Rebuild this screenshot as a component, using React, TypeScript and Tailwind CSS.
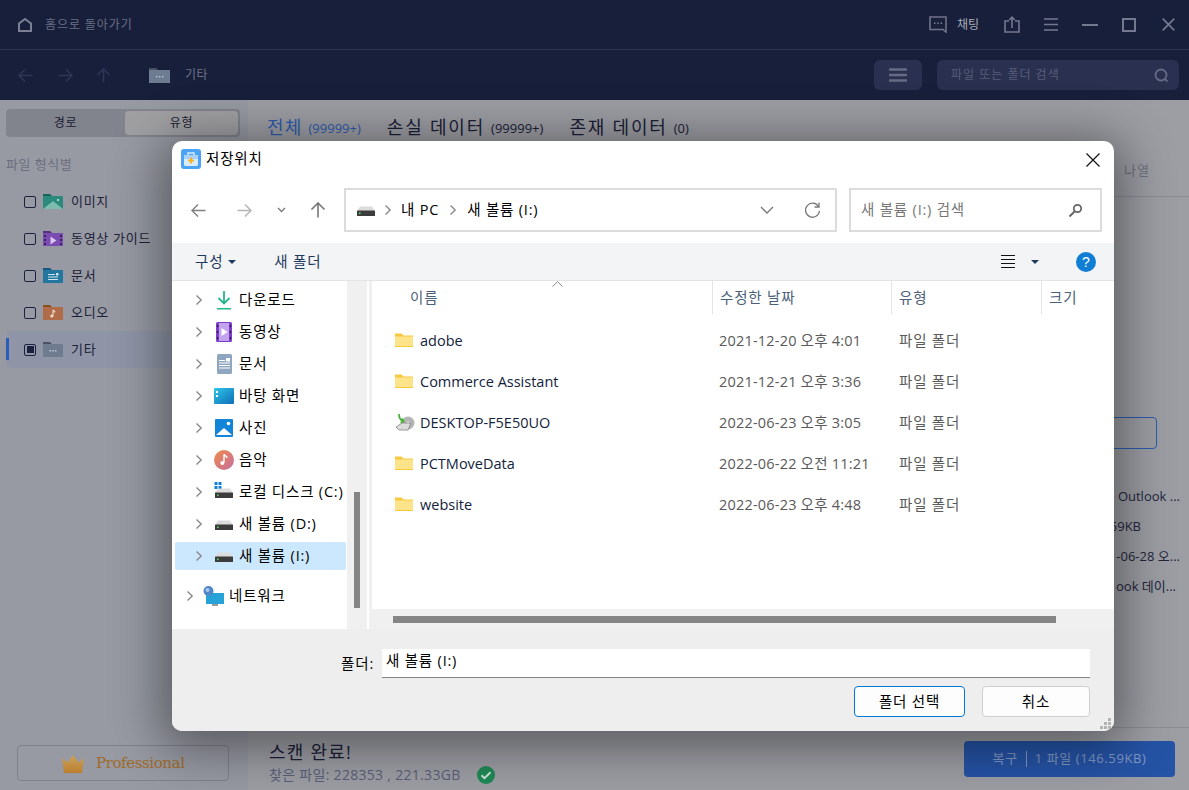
import React from "react";

const ko = "tracking-[0.8px]";

const Folder = ({ c = "#f8c93e", l = "#fde38a" }: { c?: string; l?: string }) => (
  <svg width="18" height="15" viewBox="0 0 18 15" className="shrink-0">
    <path d="M0 0.5h6.5l2 2H18V14H0z" fill={c} />
    <rect x="0" y="3.5" width="18" height="10.5" fill={l} />
    <rect x="0" y="13" width="18" height="1" fill={c} />
  </svg>
);

const Drive = ({ win = false }: { win?: boolean }) => (
  <svg width="20" height="20" viewBox="0 0 20 20" className="shrink-0">
    {win && (
      <g fill="#0f80d8">
        <rect x="0.5" y="0" width="3" height="3" />
        <rect x="4.5" y="0" width="3" height="3" />
        <rect x="0.5" y="4" width="3" height="3" />
        <rect x="4.5" y="4" width="3" height="3" />
      </g>
    )}
    <path d="M4 6.500h12l3 4.500H1z" fill="#dcdcdc" />
    <rect x="1" y="10.500" width="18" height="5.500" rx="0.5" fill="#3c3c3c" />
    <rect x="3" y="12.500" width="1.600" height="1.600" fill="#5fd35f" />
  </svg>
);

const Chev = ({ cls = "" }: { cls?: string }) => (
  <svg width="8" height="12" viewBox="0 0 8 12" className={"shrink-0 " + cls}>
    <path d="M1.500 1.500L6.200 6L1.500 10.500" fill="none" stroke="#8a8a8a" strokeWidth="1.400" />
  </svg>
);

const Arrow = ({ c, dir, w = 15 }: { c: string; dir: "l" | "r" | "u"; w?: number }) => (
  <svg width={w} height={w} viewBox="0 0 16 16" className="shrink-0">
    {dir === "l" && <path d="M15.500 8H1M7.500 1.500L1 8l6.500 6.500" fill="none" stroke={c} strokeWidth="1.600" />}
    {dir === "r" && <path d="M.5 8H15M8.500 1.500L15 8l-6.500 6.500" fill="none" stroke={c} strokeWidth="1.600" />}
    {dir === "u" && <path d="M8 15.500V1M1.500 7.500L8 1l6.500 6.500" fill="none" stroke={c} strokeWidth="1.600" />}
  </svg>
);

const Cat = ({ c, d, children }: { c: string; d: string; children?: React.ReactNode }) => (
  <svg width="20" height="15" viewBox="0 0 20 15" className="shrink-0">
    <path d="M0 0h7l2 2h11v3H0z" fill={d} />
    <rect y="2" width="20" height="13" fill={c} />
    {children}
  </svg>
);

const treeIcons: Record<string, React.ReactNode> = {
  down: (
    <svg width="18" height="20" viewBox="0 0 18 20">
      <path d="M9 1v12M3.500 8L9 13.500 14.500 8" fill="none" stroke="#25b58c" strokeWidth="1.800" />
      <rect x="2" y="18" width="14" height="1.500" fill="#25b58c" />
    </svg>
  ),
  video: (
    <svg width="16" height="20" viewBox="0 0 16 20">
      <rect width="16" height="20" rx="1.500" fill="#7c3fc4" />
      <rect x="3" y="1" width="10" height="18" fill="#c3a3ee" />
      <path d="M5.500 6l6 4-6 4z" fill="#fff" />
      <g fill="#2d1650">
        <rect x="1" y="3" width="1.200" height="2" />
        <rect x="1" y="9" width="1.200" height="2" />
        <rect x="1" y="15" width="1.200" height="2" />
        <rect x="13.800" y="3" width="1.200" height="2" />
        <rect x="13.800" y="9" width="1.200" height="2" />
        <rect x="13.800" y="15" width="1.200" height="2" />
      </g>
    </svg>
  ),
  doc: (
    <svg width="15" height="20" viewBox="0 0 15 20">
      <rect width="15" height="20" rx="1.500" fill="#8fa6c0" />
      <g fill="#fff">
        <rect x="2" y="6" width="6" height="1" />
        <rect x="2" y="8.500" width="11" height="1" />
        <rect x="2" y="11" width="11" height="1" />
        <rect x="2" y="13.500" width="11" height="1" />
        <rect x="9" y="4" width="4" height="3.500" />
      </g>
    </svg>
  ),
  desk: (
    <svg width="20" height="16" viewBox="0 0 20 16">
      <defs>
        <linearGradient id="dk" x1="0" y1="0" x2="1" y2="1">
          <stop offset="0" stopColor="#2fc6e8" />
          <stop offset="1" stopColor="#0e6eb8" />
        </linearGradient>
      </defs>
      <rect width="20" height="16" rx="1" fill="url(#dk)" />
      <rect x="2" y="3" width="2" height="2" fill="#fff" />
      <rect x="2" y="7" width="2" height="2" fill="#fff" />
    </svg>
  ),
  photo: (
    <svg width="18" height="18" viewBox="0 0 18 18">
      <rect width="18" height="18" rx="1" fill="#1285d8" />
      <circle cx="13.500" cy="4.500" r="1.800" fill="#fff" />
      <path d="M1 16l8-7 8 7z" fill="#fff" />
    </svg>
  ),
  music: (
    <svg width="20" height="20" viewBox="0 0 20 20">
      <defs>
        <linearGradient id="mu" x1="0" y1="0" x2="1" y2="1">
          <stop offset="0" stopColor="#ef8a4a" />
          <stop offset="1" stopColor="#c66f9e" />
        </linearGradient>
      </defs>
      <circle cx="10" cy="10" r="10" fill="url(#mu)" />
      <path d="M10 4.500v8" stroke="#fff" strokeWidth="1.400" />
      <path d="M10 4.500c1 1.500 3 1.500 3 3.500" stroke="#fff" strokeWidth="1.400" fill="none" />
      <circle cx="8.300" cy="13" r="2" fill="#fff" />
    </svg>
  ),
};

const tree = [
  { k: "down", t: "다운로드" },
  { k: "video", t: "동영상" },
  { k: "doc", t: "문서" },
  { k: "desk", t: "바탕 화면" },
  { k: "photo", t: "사진" },
  { k: "music", t: "음악" },
  { k: "c", t: "로컬 디스크 (C:)" },
  { k: "d", t: "새 볼륨 (D:)" },
  { k: "i", t: "새 볼륨 (I:)" },
];

const files = [
  { n: "adobe", d: "2021-12-20 오후 4:01" },
  { n: "Commerce Assistant", d: "2021-12-21 오후 3:36" },
  { n: "DESKTOP-F5E50UO", d: "2022-06-23 오후 3:05", sys: true },
  { n: "PCTMoveData", d: "2022-06-22 오전 11:21" },
  { n: "website", d: "2022-06-23 오후 4:48" },
];

const cats = [
  {
    t: "이미지",
    i: (
      <Cat c="#2b8a7c" d="#17635a">
        <path d="M0 15l10-8 10 8z" fill="#7fbcb0" />
        <rect x="14" y="5" width="2" height="2" fill="#a9d8cd" />
      </Cat>
    ),
  },
  {
    t: "동영상 가이드",
    i: (
      <Cat c="#7a4bb0" d="#54307f">
        <path d="M7.500 5.500l6 4-6 4z" fill="#d9c6ee" />
        <rect x="1" y="4" width="2" height="2" fill="#3a2160" />
        <rect x="1" y="8" width="2" height="2" fill="#3a2160" />
        <rect x="1" y="12" width="2" height="2" fill="#3a2160" />
        <rect x="17" y="4" width="2" height="2" fill="#3a2160" />
        <rect x="17" y="8" width="2" height="2" fill="#3a2160" />
        <rect x="17" y="12" width="2" height="2" fill="#3a2160" />
      </Cat>
    ),
  },
  {
    t: "문서",
    i: (
      <Cat c="#23769f" d="#15587c">
        <rect x="5" y="6" width="7" height="1" fill="#cfe3ee" />
        <rect x="5" y="8.500" width="10" height="1" fill="#cfe3ee" />
        <rect x="5" y="11" width="10" height="1" fill="#cfe3ee" />
        <rect x="13" y="5" width="2.500" height="2.500" fill="#cfe3ee" />
      </Cat>
    ),
  },
  {
    t: "오디오",
    i: (
      <Cat c="#b06c48" d="#8a5120">
        <path d="M10 5v6" stroke="#ecd9cc" strokeWidth="1.200" />
        <path d="M10 5c1 1 2 1 2 2.500" stroke="#ecd9cc" strokeWidth="1.200" fill="none" />
        <circle cx="8.800" cy="11" r="1.600" fill="#ecd9cc" />
      </Cat>
    ),
  },
  {
    t: "기타",
    on: true,
    i: (
      <Cat c="#6f7c8f" d="#4c5462">
        <g fill="#c4cad4">
          <rect x="6.500" y="8" width="1.500" height="1.500" />
          <rect x="9.250" y="8" width="1.500" height="1.500" />
          <rect x="12" y="8" width="1.500" height="1.500" />
        </g>
      </Cat>
    ),
  },
];

export default function App() {
  return (
    <div className="relative flex h-[790px] w-[1189px] flex-col overflow-hidden bg-[#9d9ea4] font-['Open_Sans','Noto_Sans_CJK_KR',sans-serif] text-[14px]">
      {/* top bar */}
      <div className="flex h-[50px] shrink-0 items-center border-b border-[#2c3350] bg-[#181f3b] pl-[18px] pr-[14px]">
        <svg width="14" height="14" viewBox="0 0 14 14" className="shrink-0">
          <path d="M1 13V5.500L7 1l6 4.500V13z" fill="none" stroke="#7b7f93" strokeWidth="2" />
        </svg>
        <span className="ml-[13px] text-[12px] tracking-[0.9px] text-[#6a6f85]">홈으로 돌아가기</span>
        <div className="ml-auto flex items-center">
          <svg width="18" height="17" viewBox="0 0 18 17" className="-ml-px shrink-0">
            <path d="M1 1h16v15l-3-2.500H1z" fill="none" stroke="#6f7389" strokeWidth="1.600" />
            <g fill="#8b8fa2">
              <rect x="5" y="6.500" width="1.400" height="1.400" />
              <rect x="8.300" y="6.500" width="1.400" height="1.400" />
              <rect x="11.600" y="6.500" width="1.400" height="1.400" />
            </g>
          </svg>
          <span className="ml-[10px] text-[12px] text-[#a8abb8]">채팅</span>
          <svg width="16" height="17" viewBox="0 0 16 17" className="ml-[25px] shrink-0">
            <path d="M5 5H1v11h14V5h-4" fill="none" stroke="#74788e" strokeWidth="1.600" />
            <path d="M8 12V1.500M5.200 4L8 1.200 10.800 4" fill="none" stroke="#74788e" strokeWidth="1.600" />
          </svg>
          <svg width="14" height="13" viewBox="0 0 14 13" className="ml-[24px] shrink-0">
            <path d="M0 1h14M0 6.500h14M0 12h14" stroke="#74788e" strokeWidth="1.500" />
          </svg>
          <div className="ml-[24px] h-[2px] w-[16px] bg-[#74788e]" />
          <div className="ml-[24px] h-[14px] w-[14px] border-2 border-[#74788e]" />
          <svg width="13" height="13" viewBox="0 0 13 13" className="ml-[26px] shrink-0">
            <path d="M.7.700l11.600 11.600M12.300.700L.7 12.300" stroke="#74788e" strokeWidth="1.700" />
          </svg>
        </div>
      </div>
      {/* nav bar */}
      <div className="flex h-[50px] shrink-0 items-center bg-[#181f3b] pl-[18px] pr-[10px]">
        <Arrow c="#2f3757" dir="l" />
        <span className="w-[25px]" />
        <Arrow c="#2f3757" dir="r" />
        <span className="w-[23px]" />
        <Arrow c="#2f3757" dir="u" />
        <svg width="21" height="15" viewBox="0 0 21 15" className="ml-[38px] shrink-0">
          <path d="M0 0h7l2 2h12v3H0z" fill="#4a5161" />
          <rect y="2" width="21" height="13" fill="#6d7c90" />
          <g fill="#c5cad2">
            <rect x="7" y="8" width="1.400" height="1.400" />
            <rect x="10" y="8" width="1.400" height="1.400" />
            <rect x="13" y="8" width="1.400" height="1.400" />
          </g>
        </svg>
        <span className="ml-[15px] text-[12px] tracking-[0.5px] text-[#6f7389]">기타</span>
        <div className="ml-auto flex h-[30px] w-[48px] items-center justify-center rounded-md bg-[#2a3150]">
          <svg width="18" height="14" viewBox="0 0 18 14">
            <path d="M1 1.500h16M1 7h16M1 12.500h16" stroke="#666b83" strokeWidth="2.600" strokeLinecap="round" />
          </svg>
        </div>
        <div className="ml-[15px] flex h-[30px] w-[242px] items-center justify-between rounded-md bg-[#2a3150] pl-[14px] pr-[10px]">
          <span className="text-[12px] tracking-[1px] text-[#575d78]">파일 또는 폴더 검색</span>
          <svg width="15" height="15" viewBox="0 0 15 15">
            <circle cx="7" cy="7" r="5.500" fill="none" stroke="#666b83" strokeWidth="1.800" />
            <path d="M11 11l2.500 2.500" stroke="#666b83" strokeWidth="1.800" />
          </svg>
        </div>
      </div>

      {/* main */}
      <div className="flex min-h-0 flex-1">
        <div className="flex w-[248px] shrink-0 flex-col bg-[#9799a3] pb-[9px] pl-[6px]">
          <div className="mt-[9px] flex h-[28px] w-[234px] items-center rounded bg-[#81838d] px-[2px] text-[12px] tracking-[0.6px] text-[#181c30]">
            <span className="flex-1 text-center pr-[2px]">경로</span>
            <span className="flex h-[24px] w-[113px] items-center justify-center rounded-sm bg-[#a0a0a3]">유형</span>
          </div>
          <div className="mt-[18px] text-[13px] leading-[18px] tracking-[0.5px] text-[#6c6f7f]">파일 형식별</div>
          <div className="mt-[10px] flex flex-col">
            {cats.map((c) => (
              <div
                key={c.t}
                className={
                  "relative flex h-[37px] items-center pl-[18px] " +
                  (c.on ? "rounded-l-md bg-[#8f95a7]" : "")
                }
              >
                {c.on && <span className="absolute left-0 top-[7px] h-[22px] w-[3px] bg-[#2a5cb8]" />}
                <span className="flex h-[12px] w-[12px] shrink-0 items-center justify-center rounded-[2px] border border-[#1c2140]">
                  {c.on && <span className="h-[7px] w-[7px] bg-[#1c2140]" />}
                </span>
                <span className="ml-[7px]">{c.i}</span>
                <span className="ml-[8px] text-[13px] tracking-[0.7px] text-[#1d2138]">{c.t}</span>
              </div>
            ))}
          </div>
          <div className="mt-auto ml-[11px] flex h-[36px] w-[212px] items-center rounded border border-[#7f818b] pl-[43px]">
            <svg width="24" height="19" viewBox="0 0 24 19" className="shrink-0">
              <defs>
                <linearGradient id="cr" x1="0" y1="0" x2="0" y2="1">
                  <stop offset="0" stopColor="#c9a35e" />
                  <stop offset="1" stopColor="#bd7e2e" />
                </linearGradient>
              </defs>
              <path d="M1 4l5.500 4.500L12 1l5.500 7.500L23 4l-2 15H3z" fill="url(#cr)" />
            </svg>
            <span className="ml-[11px] font-['DejaVu_Serif',serif] text-[15px] tracking-[-0.4px] text-[#a06c2c]">Professional</span>
          </div>
        </div>

        <div className="flex min-w-0 flex-1 flex-col">
          <div className="flex h-[54px] shrink-0 items-end pb-[14px] pl-[19px] text-[#1b2036]">
            <span className="text-[18px] leading-[26px] tracking-[1.2px] text-[#2e5bab]">전체</span>
            <span className="ml-[6px] pb-[2px] text-[13px] leading-[20px] text-[#2e5bab]">(99999+)</span>
            <span className="ml-[26px] text-[18px] leading-[26px] tracking-[1.8px]">손실 데이터</span>
            <span className="ml-[6px] pb-[2px] text-[13px] leading-[20px]">(99999+)</span>
            <span className="ml-[26px] text-[18px] leading-[26px] tracking-[1.8px]">존재 데이터</span>
            <span className="ml-[6px] pb-[2px] text-[13px] leading-[20px]">(0)</span>
          </div>
          <div className="flex h-[43px] shrink-0 items-center justify-end border-b border-[#8b8d95] pb-[9px] pr-[39px]">
            <span className="text-[13px] tracking-[1px] text-[#6e7180]">나열</span>
          </div>
          <div className="flex min-h-0 flex-1 flex-col items-end pr-[9px]">
            <div className="mr-[23px] mt-[220px] h-[32px] w-[200px] rounded border border-[#2a5cb0]" />
            <div className="mt-[38px] flex w-[200px] flex-col gap-[12px] text-right text-[13px] leading-[18px] text-[#22263c]">
              <span>Outlook ...</span>
              <span className="pr-[39px]">59KB</span>
              <span>-06-28 오...</span>
              <span className="pr-[4px]">ook 데이...</span>
            </div>
          </div>
          <div className="flex h-[63px] shrink-0 items-center border-t border-[#8b8d95] pl-[21px] pr-[14px]">
            <div className="flex flex-col pt-[7px]">
              <span className="text-[18px] leading-[25px] tracking-[1.2px] text-[#1a2038]">스캔 완료!</span>
              <span className="flex items-center text-[14px] leading-[20px] tracking-[0.3px] text-[#5a5f7a]">
                찾은 파일: 228353 , 221.33GB
                <svg width="18" height="18" viewBox="0 0 18 18" className="ml-[16px] shrink-0">
                  <circle cx="9" cy="9" r="9" fill="#1f8a55" />
                  <path d="M4.500 9.200l3 3 6-6" fill="none" stroke="#cfe6da" strokeWidth="2" />
                </svg>
              </span>
            </div>
            <div className="ml-auto flex h-[36px] w-[211px] items-center justify-center rounded bg-[#2553a5] text-[13px] tracking-[0.6px] text-[#8299c4]">
              복구
              <span className="mx-[8px] h-[16px] w-px bg-[#8299c4]" />
              1 파일 (146.59KB)
            </div>
          </div>
        </div>
      </div>

      {/* dialog */}
      <div className="absolute left-[172px] top-[141px] flex h-[590px] w-[942px] flex-col overflow-hidden rounded-[10px] bg-white text-black shadow-[0_8px_50px_10px_rgba(0,0,0,0.42)]">
        <div className="flex h-[47px] shrink-0 items-start pl-[9px] pr-[14px] pt-[8px]">
          <svg width="20" height="20" viewBox="0 0 20 20" className="shrink-0">
            <rect width="20" height="20" rx="3" fill="#4ba3f5" />
            <rect x="3" y="6" width="14" height="11" rx="1.500" fill="#d8ecff" />
            <path d="M7 6V4h6v2" fill="none" stroke="#d8ecff" strokeWidth="1.500" />
            <rect x="3" y="6" width="14" height="4" fill="#a9d2fa" />
            <path d="M10 8.500v6M7 11.500h6" stroke="#f3b42c" strokeWidth="2" />
          </svg>
          <span className={"ml-[5px] text-[14.5px] leading-[20px] " + ko}>저장위치</span>
          <svg width="14" height="14" viewBox="0 0 14 14" className="ml-auto mt-[4px] shrink-0">
            <path d="M.5.500l13 13M13.500.500l-13 13" stroke="#111" strokeWidth="1.200" />
          </svg>
        </div>

        <div className="flex h-[55px] shrink-0 items-start">
          <div className="flex h-[44px] w-[172px] shrink-0 items-center pl-[19px]">
            <Arrow c="#808080" dir="l" />
            <span className="w-[31px]" />
            <Arrow c="#b5b5b5" dir="r" />
            <svg width="9" height="6" viewBox="0 0 9 6" className="ml-[25px] shrink-0">
              <path d="M1 1l3.500 3.500L8 1" fill="none" stroke="#777" strokeWidth="1.300" />
            </svg>
            <span className="w-[24px]" />
            <Arrow c="#777" dir="u" w={16} />
          </div>
          <div className="flex h-[44px] w-[493px] shrink-0 items-center border-2 border-[#dcdcdc] pl-[10px] pr-[14px]">
            <Drive />
            <Chev cls="ml-[8px]" />
            <span className={"ml-[9px] text-[14.5px] " + ko}>내 PC</span>
            <Chev cls="ml-[10px]" />
            <span className={"ml-[10px] text-[14.5px] " + ko}>새 볼륨 (I:)</span>
            <svg width="14" height="8" viewBox="0 0 14 8" className="ml-auto shrink-0">
              <path d="M1 1l6 6 6-6" fill="none" stroke="#777" strokeWidth="1.300" />
            </svg>
            <svg width="17" height="17" viewBox="0 0 17 17" className="ml-[30px] shrink-0">
              <path d="M14.500 4.500A7 7 0 1 0 15.500 9" fill="none" stroke="#777" strokeWidth="1.300" />
              <path d="M15 .500v4.500h-4.500" fill="none" stroke="#777" strokeWidth="1.300" />
            </svg>
          </div>
          <div className="ml-[12px] flex h-[44px] w-[253px] shrink-0 items-center justify-between border-2 border-[#dcdcdc] pl-[10px] pr-[17px]">
            <span className={"text-[14.5px] text-[#777] " + ko}>새 볼륨 (I:) 검색</span>
            <svg width="15" height="15" viewBox="0 0 15 15">
              <circle cx="9.500" cy="5.500" r="3.700" fill="none" stroke="#666" strokeWidth="1.800" />
              <path d="M6.500 8.500L1.500 13.500" stroke="#666" strokeWidth="2" />
            </svg>
          </div>
        </div>

        <div className="flex h-[38px] shrink-0 items-center border-b border-[#e4e4e4] bg-[#f3f4f6] pl-[23px] pr-[18px] text-[#1e3a5c]">
          <span className={"text-[14.5px] " + ko}>구성</span>
          <svg width="8" height="4" viewBox="0 0 8 4" className="ml-[5px] shrink-0">
            <path d="M0 0h8L4 4z" fill="#1e3a5c" />
          </svg>
          <span className={"ml-[38px] text-[14.5px] " + ko}>새 폴더</span>
          <svg width="14" height="13" viewBox="0 0 14 13" className="ml-auto shrink-0">
            <path d="M0 .5h14M0 4.500h14M0 8.500h14M0 12.500h14" stroke="#111" strokeWidth="1" />
          </svg>
          <svg width="8" height="4" viewBox="0 0 8 4" className="ml-[16px] shrink-0">
            <path d="M0 0h8L4 4z" fill="#1e3a5c" />
          </svg>
          <svg width="20" height="20" viewBox="0 0 20 20" className="ml-[37px] shrink-0">
            <circle cx="10" cy="10" r="10" fill="#0f7ed4" />
            <text x="10" y="15" textAnchor="middle" fontSize="14" fill="#fff" fontFamily="Liberation Sans">?</text>
          </svg>
        </div>

        <div className="flex h-[348px] shrink-0">
          {/* tree */}
          <div className="flex w-[175px] shrink-0 flex-col pl-[3px] pr-px pt-[3px]">
            {tree.map((r) => (
              <div key={r.k} className="flex h-[32px] items-center">
                <div className={"flex h-[28px] w-full items-center rounded-[2px] pl-[20px] " + (r.k === "i" ? "bg-[#cce8ff]" : "")}>
                  <Chev />
                  <span className="ml-[11px] flex w-[20px] shrink-0 items-center justify-center">
                    {r.k === "c" ? <Drive win /> : r.k === "d" || r.k === "i" ? <Drive /> : treeIcons[r.k]}
                  </span>
                  <span className={"ml-[5px] whitespace-nowrap text-[14.5px] " + ko}>{r.t}</span>
                </div>
              </div>
            ))}
            <div className="mt-[8px] flex h-[32px] items-center pl-[11px]">
              <Chev />
              <svg width="21" height="21" viewBox="0 0 21 21" className="ml-[9px] shrink-0">
                <rect x="3" y="7" width="18" height="11" fill="#27a2d6" />
                <rect x="9" y="18" width="6" height="2" fill="#999" />
                <circle cx="5.500" cy="5" r="5" fill="#4f87c9" />
                <circle cx="4.500" cy="4" r="2" fill="#a8c8ec" />
              </svg>
              <span className={"ml-[5px] text-[14.5px] " + ko}>네트워크</span>
            </div>
          </div>
          {/* tree scrollbar */}
          <div className="flex w-[20px] shrink-0 flex-col bg-[#f0f0f0] pl-[7px] pt-[211px]">
            <div className="h-[116px] w-[6px] bg-[#858585]" />
          </div>
          <div className="w-[2px] shrink-0" />
          <div className="w-[3px] shrink-0 bg-[#f0f0f0]" />
          {/* list */}
          <div className="flex min-w-0 flex-1 flex-col">
            <div className="flex h-[35px] shrink-0 text-[14.5px] tracking-[0.8px] text-[#4c607a]">
              <div className="relative flex h-[33px] w-[340px] shrink-0 items-center pl-[38px]">
                이름
                <svg width="11" height="6" viewBox="0 0 11 6" className="absolute left-[180px] top-0">
                  <path d="M.5 5.500L5.500.700l5 4.800" fill="none" stroke="#888" strokeWidth="1" />
                </svg>
              </div>
              <div className="flex h-[33px] w-[179px] shrink-0 items-center border-l border-[#e5e5e5] pl-[7px]">수정한 날짜</div>
              <div className="flex h-[33px] w-[150px] shrink-0 items-center border-l border-[#e5e5e5] pl-[7px]">유형</div>
              <div className="flex h-[33px] flex-1 items-center border-l border-[#e5e5e5] pl-[7px]">크기</div>
            </div>
            <div className="flex min-h-0 flex-1 flex-col pt-[4px]">
              {files.map((f) => (
                <div key={f.n} className="flex h-[41px] shrink-0 items-center text-[14.5px]">
                  <div className="flex w-[340px] shrink-0 items-center pl-[23px]">
                    <span className="flex w-[20px] shrink-0 justify-start">
                      {f.sys ? (
                        <svg width="20" height="20" viewBox="0 0 20 20">
                          <circle cx="13" cy="10" r="6.500" fill="#b5b5b5" />
                          <circle cx="13" cy="10" r="1.500" fill="#fff" />
                          <path d="M1 14l6-4h9l-3 7H4z" fill="#dcdcdc" stroke="#777" strokeWidth=".7" />
                          <path d="M4 1c0 4 1 6 4 7M5.500 9.500l3-1-1.500-3" fill="none" stroke="#42b32c" strokeWidth="1.700" />
                        </svg>
                      ) : (
                        <Folder />
                      )}
                    </span>
                    <span className="ml-[5px] whitespace-nowrap text-[#14233c]">{f.n}</span>
                  </div>
                  <span className="w-[180px] shrink-0 whitespace-nowrap pl-[7px] tracking-[0.2px] text-[#5a5a5a]">{f.d}</span>
                  <span className={"pl-[7px] text-[#5a5a5a] " + ko}>파일 폴더</span>
                </div>
              ))}
            </div>
            <div className="flex h-[20px] shrink-0 items-center bg-[#f0f0f0] pl-[21px]">
              <div className="h-[7px] w-[663px] bg-[#858585]" />
            </div>
          </div>
        </div>

        <div className="relative flex flex-1 flex-col bg-[#eeeeee] pr-[24px] pt-[20px]">
          <div className="flex items-center justify-end">
            <span className={"mr-[8px] text-[14.5px] " + ko}>폴더:</span>
            <div className={"flex h-[29px] w-[708px] items-start border-b border-[#858585] bg-white pl-[4px] text-[14.5px] leading-[24px] " + ko}>새 볼륨 (I:)</div>
          </div>
          <div className="mt-[8px] flex justify-end gap-[17px]">
            <div className={"flex h-[31px] w-[111px] items-center justify-center rounded-[4px] border border-[#0078d4] bg-[#fdfdfd] text-[14.5px] " + ko}>폴더 선택</div>
            <div className={"flex h-[31px] w-[108px] items-center justify-center rounded-[4px] border border-[#cfcfcf] bg-[#fdfdfd] text-[14.5px] " + ko}>취소</div>
          </div>
          <svg width="12" height="12" viewBox="0 0 12 12" className="absolute bottom-px right-[2px]">
            <g fill="#b3b3b3">
              <rect x="8" y="0" width="3" height="3" />
              <rect x="4" y="4" width="3" height="3" />
              <rect x="8" y="4" width="3" height="3" />
              <rect x="0" y="8" width="3" height="3" />
              <rect x="4" y="8" width="3" height="3" />
              <rect x="8" y="8" width="3" height="3" />
            </g>
          </svg>
        </div>
      </div>
    </div>
  );
}
